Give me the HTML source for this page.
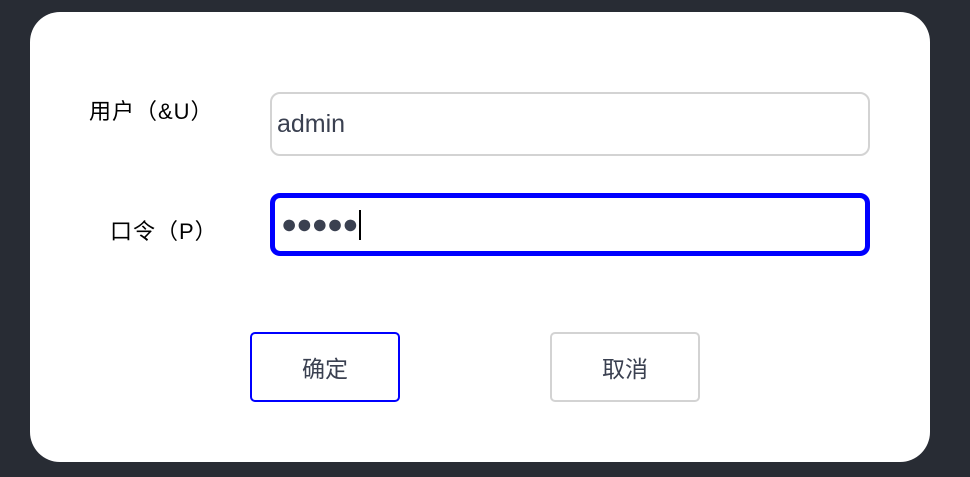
<!DOCTYPE html>
<html><head><meta charset="utf-8"><style>
body{margin:0;width:970px;height:477px;background:#282c34;position:relative;overflow:hidden;font-family:"Liberation Sans","Noto Sans CJK SC",sans-serif}
.card{position:absolute;left:30px;top:12px;width:900px;height:450px;background:#fff;border-radius:30px}
.lbl{position:absolute;font-size:22px;color:#000;white-space:nowrap;letter-spacing:1px}
.in{position:absolute;box-sizing:border-box;left:270px;width:600px;background:#fff;font-size:25px;color:#3a4050;display:flex;align-items:center}
.btn{position:absolute;box-sizing:border-box;top:332px;width:150px;height:70px;border-radius:5px;font-size:23px;color:#3a4050;display:flex;align-items:center;justify-content:center}
</style></head><body>
<div class="card"></div>
<div class="lbl" style="left:89px;top:94px">用户（&amp;U）</div>
<div class="lbl" style="left:110px;top:214px">口令（P）</div>
<div class="in" style="top:92px;height:64px;border:2px solid #d3d3d3;border-radius:10px;padding-left:5px">admin</div>
<div class="in" style="top:193px;height:63px;border:5px solid #0000ff;border-radius:10px;padding-left:6px;letter-spacing:-1px"><span style="font-size:27px">●●●●●</span><span style="display:inline-block;width:2px;height:30px;background:#000;margin-left:1px"></span></div>
<div class="btn" style="left:250px;border:2px solid #0000ff">确定</div>
<div class="btn" style="left:550px;border:2px solid #d3d3d3">取消</div>
</body></html>
